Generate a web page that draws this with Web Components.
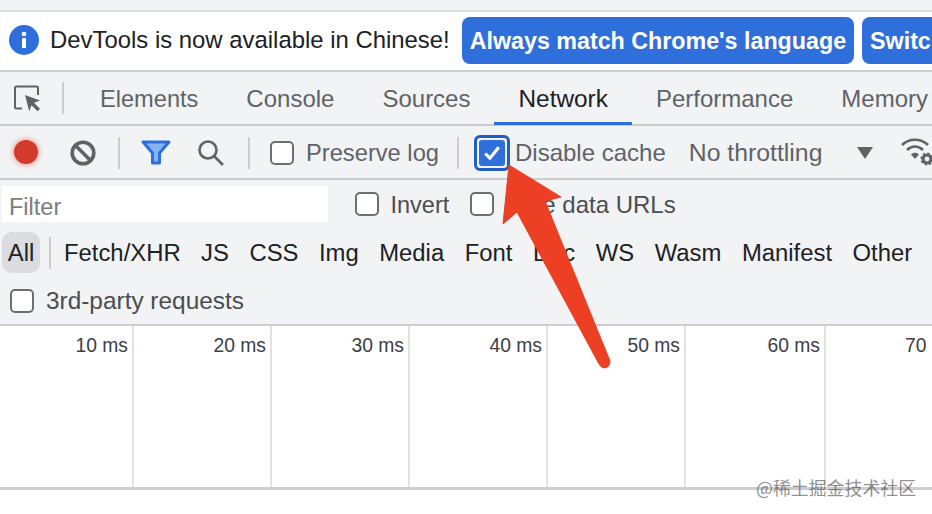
<!DOCTYPE html>
<html><head><meta charset="utf-8">
<style>
html,body{margin:0;padding:0;background:#fff}
body{width:932px;height:514px;overflow:hidden;position:relative;font-family:"Liberation Sans",Arial,sans-serif;display:flex;flex-direction:column}
</style></head><body>
<dt-infobar></dt-infobar>
<dt-tabs></dt-tabs>
<dt-toolbar></dt-toolbar>
<dt-filters></dt-filters>
<dt-timeline></dt-timeline>
<dt-annotation></dt-annotation>
<script>
function def(name,html){
  customElements.define(name,class extends HTMLElement{
    constructor(){super();const s=this.attachShadow({mode:'open'});s.innerHTML=html;}
  });
}
def('dt-check',`<style>
:host{display:inline-flex;align-items:center;font-size:23.7px;color:#5f6368}
i{display:block;width:20px;height:20px;border:2px solid #6b6e72;border-radius:5px;background:#fff;flex:none}
span{margin-left:12px;white-space:nowrap;padding-top:var(--ty,0)}
</style><i></i><span><slot></slot></span>`);
def('dt-infobar',`<style>
:host{display:block;flex:none;height:72px;box-sizing:border-box;background:#fff;overflow:hidden;border-bottom:2px solid #cbcdd0}
.strip{height:10px;background:#f1f3f4;border-bottom:2px solid #dcdee0}
.row{display:flex;align-items:center;height:58px;padding:0 0 2px 9px;box-sizing:border-box;white-space:nowrap;font-size:23.9px}
svg{flex:none;width:30px;height:30px}
.t{margin-left:11px;color:#202124}
.b{flex:none;height:47px;line-height:48px;background:#2f6fdc;color:#fff;font-weight:bold;border-radius:8px;padding:0 8px;margin-left:8px;font-size:23.25px}
.t+.b{margin-left:12px}
</style><div class="strip"></div><div class="row">
<svg viewBox="0 0 30 30"><circle cx="15" cy="15" r="15" fill="#2f6fdc"/><rect x="13" y="13" width="4" height="10" rx=".6" fill="#fff"/><circle cx="15" cy="9" r="2.3" fill="#fff"/></svg>
<span class="t">DevTools is now available in Chinese!</span>
<span class="b">Always match Chrome's language</span><span class="b">Switch DevTools to Chinese</span>
</div>`);
def('dt-tabs',`<style>
:host{display:flex;flex:none;height:54px;box-sizing:border-box;background:#f1f3f4;border-bottom:2px solid #cbcdd0;align-items:stretch;white-space:nowrap;font-size:24px;color:#5f6368}
.ins{flex:none;width:63px;display:flex;align-items:center;padding-left:14px;box-sizing:border-box}
.sep{flex:none;width:2px;height:32px;background:#cbcdd0;align-self:center;margin-left:-1px}
.tab{flex:none;padding:4px 24px 0;display:flex;align-items:center;margin-bottom:-1px;border-bottom:3px solid transparent;box-sizing:border-box}
.tab.on{color:#202124;border-bottom-color:#2f6fdc;font-size:24.4px}
.first{margin-left:12px;font-size:23.6px}
</style>
<div class="ins"><svg width="27" height="27" viewBox="0 0 27 27" fill="none"><path d="M8 23.500H2.500a1.500 1.500 0 0 1-1.500-1.500V3a1.500 1.500 0 0 1 1.500-1.500h20A1.500 1.500 0 0 1 24 3v7" stroke="#5f6368" stroke-width="2"/><path d="M11 10l15 5.500-6 2.300 6 6-2.500 2.500-6-6-2.300 6z" fill="#5f6368"/></svg></div>
<div class="sep"></div>
<div class="tab first">Elements</div><div class="tab">Console</div><div class="tab">Sources</div><div class="tab on">Network</div><div class="tab">Performance</div><div class="tab">Memory</div>`);
def('dt-toolbar',`<style>
:host{display:flex;flex:none;height:54px;box-sizing:border-box;background:#f1f3f4;border-bottom:2px solid #cbcdd0;align-items:center;white-space:nowrap;font-size:24px;color:#5f6368;overflow:hidden;padding-top:1px}
svg{flex:none;display:block}
.sep{flex:none;width:2px;height:32px;background:#cbcdd0}
.rec{margin-left:14px;width:24px;height:24px;border-radius:50%;background:#d33a2c;box-shadow:0 0 4px 2px #f0b6ae;flex:none;margin-top:-1px}
.focus{flex:none;width:36px;height:36px;box-sizing:border-box;border:3px solid #1f5fc4;border-radius:6px;background:#f1f3f4;padding:2px;margin-left:15px;margin-right:5px}
.focus i{display:block;width:100%;height:100%;background:#2f6fdc;border-radius:3px}
.focus svg{width:100%;height:100%}
</style>
<div class="rec"></div>
<svg style="margin-left:31px" width="28" height="28" viewBox="0 0 28 28" fill="none" stroke="#5f6368" stroke-width="3.600"><circle cx="14" cy="14" r="10.800"/><path d="M6.500 6.500l15 15"/></svg>
<div class="sep" style="margin-left:21px"></div>
<svg style="margin-left:21px" width="30" height="26" viewBox="0 0 30 26"><path d="M2 2h26L18.500 13v10h-7V13z" fill="#8ab2f0" stroke="#2f6fdc" stroke-width="3" stroke-linejoin="round"/></svg>
<svg style="margin-left:26px" width="28" height="28" viewBox="0 0 28 28" fill="none" stroke="#5f6368" stroke-width="2.600"><circle cx="11" cy="11" r="8.500"/><path d="M17 17l9 9"/></svg>
<div class="sep" style="margin-left:23px"></div>
<dt-check style="margin-left:20px;--ty:2px">Preserve log</dt-check>
<div class="sep" style="margin-left:18px"></div>
<div class="focus"><i><svg viewBox="0 0 25 25" fill="none"><path d="M6 13l4.500 4.500L19 7" stroke="#fff" stroke-width="3"/></svg></i></div>
<span>Disable cache</span>
<span style="margin-left:23px;font-size:24.8px">No throttling</span>
<svg style="margin-left:35px" width="16" height="12" viewBox="0 0 16 12"><path d="M0 0h16l-8 12z" fill="#5f6368"/></svg>
<svg style="margin-left:28px;margin-top:-4px" width="36" height="30" viewBox="0 0 36 30" fill="none"><path d="M1 9C8 2 20 2 27 9M6 14c5-4.500 11-4.500 16 0" stroke="#5f6368" stroke-width="2.600"/><path d="M10 18.500c2.500-2.500 5.500-2.500 8 0l-4 4.500z" fill="#5f6368"/><circle cx="26" cy="23" r="4" stroke="#5f6368" stroke-width="3.200"/><circle cx="26" cy="23" r="5.800" stroke="#5f6368" stroke-width="1.600" stroke-dasharray="2.200 2.300"/></svg>
`);
def('dt-filters',`<style>
:host{display:block;flex:none;height:146px;box-sizing:border-box;background:#f1f3f4;border-bottom:2px solid #cbcdd0;padding:6px 0 0 2px;white-space:nowrap;font-size:23.85px;overflow:hidden}
.r1{display:flex;align-items:center;height:36px}
.inp{flex:none;width:326px;height:36px;line-height:42px;background:#fff;color:#7b7d80;padding-left:7px;box-sizing:border-box;font-size:23.5px}
.r2{display:flex;align-items:center;height:41px;margin-top:10px;color:#202124;gap:20.500px}
.all{flex:none;width:38px;height:41px;line-height:41px;text-align:center;background:#dadce0;border-radius:10px;margin-right:-12px}
.sep{flex:none;width:2px;height:32px;background:#cbcdd0;margin-right:-7px}
.r3{margin:16px 0 0 8px;height:24px;display:flex;align-items:center}
dt-check{color:#4a4d51}
.r1 dt-check{--ty:2px}
.long{font-size:24.4px}
.mid{font-size:24px}
</style>
<div class="r1"><div class="inp">Filter</div><dt-check style="margin-left:26.500px;font-size:23.5px">Invert</dt-check><dt-check class="mid" style="margin-left:21px">Hide data URLs</dt-check></div>
<div class="r2"><span class="all">All</span><span class="sep"></span><span>Fetch/XHR</span><span>JS</span><span>CSS</span><span>Img</span><span>Media</span><span>Font</span><span>Doc</span><span>WS</span><span>Wasm</span><span>Manifest</span><span>Other</span></div>
<div class="r3"><dt-check class="long">3rd-party requests</dt-check></div>`);
def('dt-timeline',`<style>
:host{display:flex;flex:none;height:164px;box-sizing:border-box;background:#fff;border-bottom:3px solid #cbcdd0;font-size:19.3px;color:#3c4043;overflow:hidden;white-space:nowrap}
div{flex:none;width:138px;box-sizing:border-box;border-right:2px solid #e1e2e4;text-align:right;padding:9px 4px 0 0}
div:first-of-type{width:134px}
div:nth-of-type(6){width:140px}
div:last-of-type{border:0;text-align:left;padding-left:79px}
</style><div>10 ms</div><div>20 ms</div><div>30 ms</div><div>40 ms</div><div>50 ms</div><div>60 ms</div><div>70 ms</div>`);
def('dt-annotation',`<style>
:host{display:block;position:absolute;inset:0;pointer-events:none}
svg{position:absolute;left:0;top:0}
span{position:absolute;left:756px;top:474px;font:17.900px "Noto Sans CJK SC","Liberation Sans",sans-serif;color:rgba(70,70,70,.62);white-space:nowrap}
</style>
<svg width="932" height="514" viewBox="0 0 932 514"><path d="M509 165L561 197L545 201L610 361Q610 367 605 368Q601 368 599 364L517 212L503 224Z" fill="#ec3f24" stroke="#ec3f24" stroke-width="1" stroke-linejoin="round"/></svg>
<span>@稀土掘金技术社区</span>`);
</script>
</body></html>
